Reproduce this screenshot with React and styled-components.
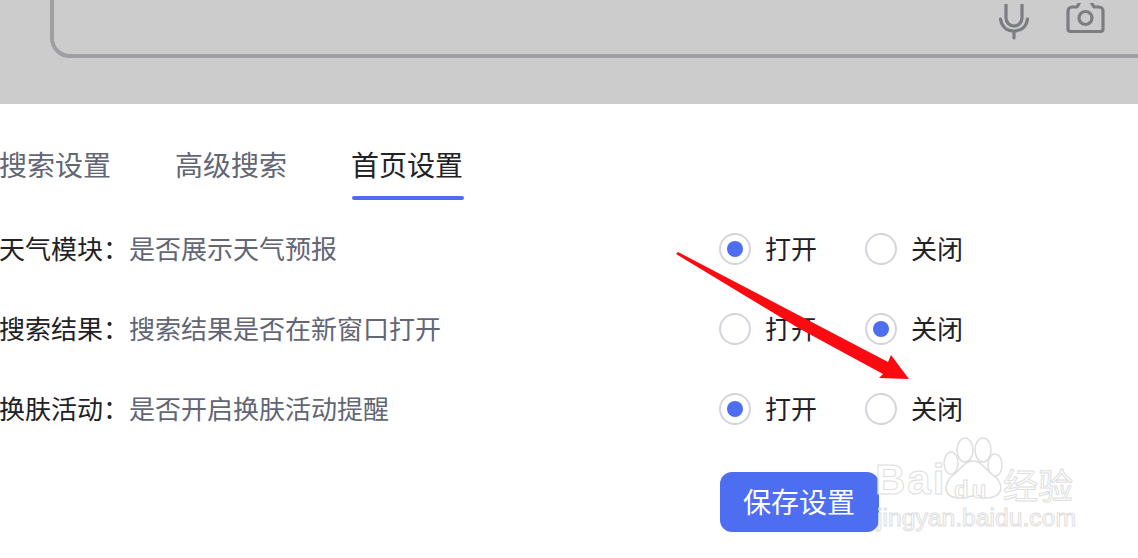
import React from 'react'
import styled, { createGlobalStyle } from 'styled-components'

const GlobalStyle = createGlobalStyle`
  html, body {
    margin: 0;
    padding: 0;
    background: #fff;
  }
  body {
    font-family: "Noto Sans CJK SC", "Liberation Sans", sans-serif;
  }
`

const Page = styled.div`
  position: relative;
  width: 1138px;
  height: 558px;
  overflow: hidden;
  background: #fff;
`

const TopBand = styled.div`
  height: 104px;
  background: #cccccc;
  overflow: hidden;
  padding-left: 50px;
`

const SearchBox = styled.div`
  box-sizing: border-box;
  width: 1120px;
  height: 88px;
  margin-top: -30px;
  border: 4px solid #9e9ea3;
  border-radius: 20px;
  display: flex;
  justify-content: flex-end;
  align-items: flex-end;
  gap: 37px;
  padding: 0 60px 21px 0;
`

const Icon = styled.svg`
  display: block;
  fill: none;
  stroke: #7c7d83;
  stroke-width: 3.2;
  stroke-linecap: round;
  stroke-linejoin: round;
`

const Tabs = styled.div`
  display: flex;
  gap: 66px;
  height: 105px;
  padding-top: 42px;
  margin-left: -1px;
  box-sizing: border-box;
`

const Tab = styled.div`
  position: relative;
  height: 40px;
  width: 110px;
  font-size: 28px;
  line-height: 36px;
  white-space: nowrap;
  color: ${p => (p.$active ? '#222226' : '#626675')};

  &::after {
    content: '';
    display: ${p => (p.$active ? 'block' : 'none')};
    position: absolute;
    left: 1px;
    right: -3px;
    top: 50px;
    height: 4px;
    border-radius: 2px;
    background: #4e6ef2;
  }
`

const Row = styled.div`
  display: grid;
  grid-template-columns: 719px 146px 1fr;
  align-items: center;
  height: 80px;
`

const Label = styled.div`
  font-size: 26px;
  color: #222226;
  white-space: nowrap;
  margin-left: -1px;
  padding-bottom: 4px;
  span {
    color: #626675;
  }
`

const Option = styled.div`
  display: flex;
  align-items: center;
  gap: 15px;
  font-size: 26px;
  color: #222226;
`

const OptionText = styled.span`
  padding-bottom: 4px;
  margin-left: -1px;
`

const Radio = styled.div`
  box-sizing: border-box;
  width: 32px;
  height: 32px;
  border-radius: 50%;
  border: 2px solid #d4d5dc;
  background: #fff;
  display: flex;
  align-items: center;
  justify-content: center;

  &::after {
    content: '';
    display: ${p => (p.$on ? 'block' : 'none')};
    width: 16px;
    height: 16px;
    border-radius: 50%;
    background: #4e6ef2;
  }
`

const Actions = styled.div`
  padding: 23px 0 0 720px;
`

const SaveButton = styled.button`
  width: 159px;
  height: 60px;
  border: 0;
  border-radius: 12px;
  background: #4e6ef2;
  color: #fff;
  font-family: inherit;
  font-size: 28px;
  padding: 0 1px 3px 0;
`

const Arrow = styled.svg`
  position: absolute;
  left: 0;
  top: 0;
  pointer-events: none;
`

const Watermark = styled.div`
  position: absolute;
  left: 874px;
  top: 436px;
  width: 204px;
  height: 100px;
  pointer-events: none;
`

const WmWord = styled.div`
  position: absolute;
  left: ${p => p.$x}px;
  top: ${p => p.$y}px;
  font-family: ${p => (p.$cjk ? '"Noto Sans CJK SC"' : '"Liberation Sans"')}, sans-serif;
  font-size: ${p => p.$size}px;
  letter-spacing: ${p => p.$spacing || 0}px;
  line-height: 1;
  font-weight: ${p => (p.$bold ? 700 : 400)};
  white-space: nowrap;
  color: rgba(255, 255, 255, 0.85);
  -webkit-text-stroke: 1px #dedede;
`

const WmPaw = styled.svg`
  position: absolute;
  left: 68px;
  top: 0;
  fill: #fff;
  stroke: #dedede;
  stroke-width: 1.5;
`

const rows = [
  { title: '天气模块', desc: '是否展示天气预报', open: true },
  { title: '搜索结果', desc: '搜索结果是否在新窗口打开', open: false },
  { title: '换肤活动', desc: '是否开启换肤活动提醒', open: true },
]

export default function App() {
  return (
    <Page>
      <GlobalStyle />
      <TopBand>
        <SearchBox>
          <Icon width="30" height="36" viewBox="0 0 30 36" style={{ marginBottom: -7 }}>
            <rect x="7" y="-8" width="16" height="30" rx="8" />
            <path d="M1.5 15c1 8 6.500 12 13.500 12s12.500-4 13.500-12M15 27v7" />
          </Icon>
          <Icon width="40" height="30" viewBox="0 0 40 30">
            <path d="M2 26V8c0-2 1.500-4 4-4h5l3.500-6M37 26V8c0-2-1.500-4-4-4h-5l-3.500-6M2 26c0 1.500 1 2.500 3 2.500h29c2 0 3-1 3-2.500" />
            <circle cx="19.500" cy="15" r="6.500" />
          </Icon>
        </SearchBox>
      </TopBand>

      <Tabs>
        <Tab>搜索设置</Tab>
        <Tab>高级搜索</Tab>
        <Tab $active>首页设置</Tab>
      </Tabs>

      {rows.map(row => (
        <Row key={row.title}>
          <Label>
            {row.title}：<span>{row.desc}</span>
          </Label>
          <Option>
            <Radio $on={row.open} />
            <OptionText>打开</OptionText>
          </Option>
          <Option>
            <Radio $on={!row.open} />
            <OptionText>关闭</OptionText>
          </Option>
        </Row>
      ))}

      <Actions>
        <SaveButton>保存设置</SaveButton>
      </Actions>

      <Watermark>
        <WmWord $x={1} $y={23} $size={42} $spacing={2} $bold>Bai</WmWord>
        <WmPaw width="64" height="66" viewBox="0 0 64 66">
          <ellipse cx="23" cy="14" rx="8" ry="12" />
          <ellipse cx="41" cy="14" rx="8" ry="12" />
          <ellipse cx="9" cy="27" rx="7" ry="11" />
          <ellipse cx="53" cy="29" rx="7" ry="11" />
          <path d="M31 25c9 0 12 9 20 14 11 7 12 23-8 23-5 0-8-2-12-2s-7 2-12 2C-1 62 2 46 11 39c8-5 11-14 20-14z" />
        </WmPaw>
        <WmWord $x={80} $y={42} $size={24} $spacing={3} $bold>du</WmWord>
        <WmWord $x={129} $y={30} $size={35} $cjk>经验</WmWord>
        <WmWord $x={3} $y={70} $size={24.700}>jingyan.baidu.com</WmWord>
      </Watermark>

      <Arrow width="1138" height="558" viewBox="0 0 1138 558">
        <polygon
          points="676,254 678,252 888,362 891,355 909,379 879,378 883,374 800,329"
          fill="#fc0a12"
        />
      </Arrow>
    </Page>
  )
}
